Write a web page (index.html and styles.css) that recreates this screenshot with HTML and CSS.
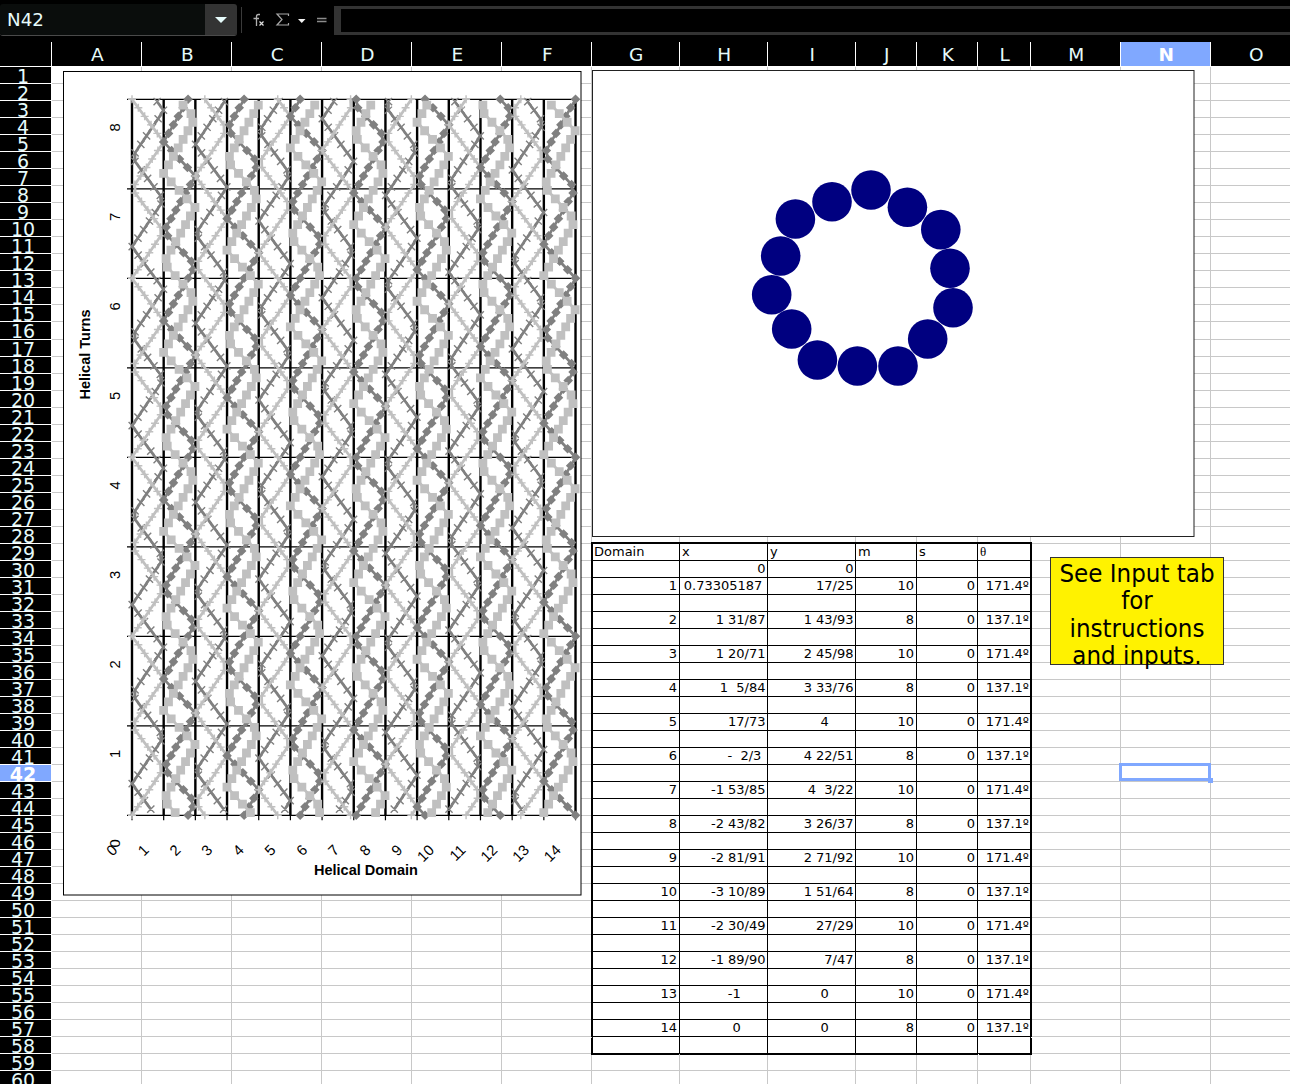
FILE: index.html
```html
<!DOCTYPE html>
<html lang="en">
<head>
<meta charset="utf-8">
<title>Helical domains</title>
<link rel="stylesheet" href="styles.css">
</head>
<body>
<div class="toolbar">
  <div class="namebox">
    <span class="namebox-text">N42</span>
    <span class="namebox-button"><svg width="14" height="8" viewBox="0 0 14 8"><path d="M1 1h12L7 7z" fill="#e6fbfb"/></svg></span>
  </div>
  <div class="formula-tools">
    <svg width="93" height="30" viewBox="240 5 93 30" fill="none">
      <path d="M241.500 7v26" stroke="#3a3a3a"/>
      <path d="M260 14.500h-1.500q-2 0-2 2V26M253.500 18.500h5.500" stroke="#b0b0b0" stroke-width="1.300"/>
      <path d="M259.500 21.500l4 4M263.500 21.500l-4 4" stroke="#e0e0e0" stroke-width="1.200"/>
      <path d="M288.500 16v-2h-11.500l5 5.500-5 5.500h11.500v-2" stroke="#a8a8a8" stroke-width="1.200"/>
      <path d="M298 19h7.500l-3.750 4z" fill="#f4f4f4"/>
      <path d="M317 18.500h9.500M317 21.500h9.500" stroke="#8c8c8c" stroke-width="1.300"/>
    </svg>
  </div>
  <div class="formula-input"></div>
</div>
<div class="columns" id="columns"></div>
<div class="body">
  <div class="row-heads" id="rowHeads"></div>
  <div class="cells" id="cells"></div>
  <svg class="chart helices" viewBox="63 71 519 825" width="519" height="825" id="helices"></svg>
  <svg class="chart ring" viewBox="592 70 603 467" width="603" height="467" id="ring"></svg>
  <div class="note"><div class="note-text">See Input tab<br>for<br>instructions<br>and inputs.</div></div>
  <div class="selection"><span class="handle"></span></div>
</div>
<script src="script.js"></script>
</body>
</html>
```
FILE: styles.css
```css
* { box-sizing: border-box; }

body {
  margin: 0;
  width: 1290px;
  height: 1084px;
  overflow: hidden;
  background: #fff;
  font-family: "DejaVu Sans", sans-serif;
  display: flex;
  flex-direction: column;
}

.toolbar {
  flex: none;
  height: 42px;
  background: #000;
  display: flex;
  padding-top: 4px;
}

.namebox {
  width: 237px;
  height: 32px;
  display: flex;
  border-bottom: 1px solid #4a4a4a;
  border-radius: 3px;
  overflow: hidden;
}

.namebox-text {
  flex: 1;
  padding-left: 7px;
  font-size: 18.300px;
  line-height: 31px;
  color: #e6fbfb;
  background: #0a0d0c;
}

.namebox-button {
  width: 32px;
  background: #333;
  display: flex;
  align-items: center;
  justify-content: center;
}

.formula-tools {
  width: 97px;
  padding: 1px 0 0 3px;
}

.formula-input {
  flex: 1;
  height: 29px;
  margin-top: 2px;
  border: solid #333;
  border-width: 3px 0 3px 7px;
}

.columns {
  flex: none;
  height: 25px;
  background: #000;
  display: flex;
  border-bottom: 1px solid #fff;
}

.column {
  flex: none;
  border-right: 1px solid #fff;
  color: #e6fbfb;
  font-size: 18.500px;
  line-height: 25px;
  text-align: center;
  padding-left: 1.500px;
}

.active {
  background: #80a8ff;
  color: #fff;
  font-weight: bold;
}

.body {
  position: relative;
  flex: none;
  width: 1290px;
  height: 1017px;
  overflow: hidden;
  display: flex;
}

.row-heads,
.cells {
  flex: none;
  display: grid;
  grid-template-rows: repeat(15, 17px) 18px;
  grid-auto-rows: 17px;
}

.row-heads { width: 51px; }

.row-head {
  background: #000;
  border-bottom: 1px solid #fff;
  color: #e6fbfb;
  font-size: 19px;
  line-height: 19px;
  text-align: center;
  padding-right: 5px;
}

.row-head.active { background: #80a8ff; color: #fff; }

.cells {
  isolation: isolate;
  margin-left: 1px;
  grid-template-columns: repeat(6, 90px) repeat(3, 88px) 61px 61px 53px repeat(3, 90px);
}

.cell {
  border-right: 1px solid #c8c8c8;
  border-bottom: 1px solid #c8c8c8;
  font-size: 13px;
  line-height: 16px;
  text-align: right;
  white-space: pre;
  padding: 0 2px;
}

.cell.data { border-color: #000; color: #000; z-index: 1; }
.cell.fraction { padding-right: 1.500px; }
.cell.decimal { padding-right: 0.500px; }
.cell.title { text-align: left; }
.cell.first { box-shadow: -1px 0 #000, inset 1px 0 #000; }
.cell.last { box-shadow: 1px 0 #000; padding-right: 1px; }
.cell.top { box-shadow: 0 -2px #000; }
.cell.top.first { box-shadow: -1px -2px #000, -1px 0 #000, 0 -2px #000, inset 1px 0 #000; }
.cell.top.last { box-shadow: 1px -2px #000, 1px 0 #000, 0 -2px #000; }
.cell.bottom { box-shadow: 0 1px #000; }
.cell.bottom.first { box-shadow: -1px 1px #000, inset 1px 0 #000; }
.cell.bottom.last { box-shadow: 1px 1px #000; }
.cell.theta { font-family: "Liberation Serif", serif; }

.chart { position: absolute; overflow: visible; }
.helices { left: 63px; top: 4px; }
.ring { left: 592px; top: 3px; }

.axis { font-family: "Liberation Sans", sans-serif; font-size: 14.800px; }
.axis-title { font-size: 14.500px; font-weight: bold; text-anchor: middle; }

.note {
  position: absolute;
  left: 1050px;
  top: 490px;
  width: 174px;
  height: 108px;
  border: 1px solid #333;
  background: #fff200;
}

.note-text {
  margin: 3px -10px 0;
  font-size: 24px;
  line-height: 27.300px;
  text-align: center;
  transform: scaleX(0.96);
}

.selection {
  position: absolute;
  left: 1119px;
  top: 696px;
  width: 92px;
  height: 18px;
  border: 3px solid #80a8ff;
}

.handle {
  position: absolute;
  right: -5px;
  bottom: -5px;
  width: 5px;
  height: 5px;
  background: #80a8ff;
}
```
FILE: script.js
```js
const widths = [90, 90, 90, 90, 90, 90, 88, 88, 88, 61, 61, 53, 90, 90, 90];
const names = 'ABCDEFGHIJKLMNO';
const rows = 60;

// x and y are kept with the padding of the fraction number format
const positions = [
  ['0.73305187 ', '17/25'], ['1 31/87', '1 43/93'], ['1 20/71', '2 45/98'],
  ['1  5/84', '3 33/76'], ['17/73', '4      '], ['-  2/3 ', '4 22/51'],
  ['-1 53/85', '4  3/22'], ['-2 43/82', '3 26/37'], ['-2 81/91', '2 71/92'],
  ['-3 10/89', '1 51/64'], ['-2 30/49', '27/29'], ['-1 89/90', '7/47'],
  ['-1      ', '0      '], ['0      ', '0      ']
];

const table = {
  29: ['Domain', 'x', 'y', 'm', 's', 'θ'],
  30: ['', '0', '0', '', '', '']
};
positions.forEach(([x, y], i) => {
  table[31 + 2 * i] = [String(i + 1), x, y, i % 2 ? '8' : '10', '0', i % 2 ? '137.1º' : '171.4º'];
});

function add(parent, cls, text) {
  const el = document.createElement('div');
  el.className = cls;
  el.textContent = text;
  parent.appendChild(el);
  return el;
}

const columns = document.getElementById('columns');
add(columns, 'column', '').style.width = '52px';
widths.forEach((w, i) => {
  add(columns, 'column' + (names[i] === 'N' ? ' active' : ''), names[i]).style.width = w + 'px';
});

const rowHeads = document.getElementById('rowHeads');
const cells = document.getElementById('cells');
for (let r = 1; r <= rows; r++) {
  add(rowHeads, 'row-head' + (r === 42 ? ' active' : ''), r);
  for (let c = 0; c < widths.length; c++) {
    let cls = 'cell';
    let text = '';
    if (r >= 29 && r <= 58 && c >= 6 && c <= 11) {
      cls += ' data';
      text = (table[r] || [])[c - 6] || '';
      if (c === 7 || c === 8) cls += text.includes('.') ? ' decimal' : ' fraction';
      if (r === 29) cls += ' title top';
      if (r === 58) cls += ' bottom';
      if (c === 6) cls += ' first';
      if (c === 11) cls += ' last';
      if (text === 'θ') cls += ' theta';
    }
    add(cells, cls, text);
  }
}

// Helix chart
const left = 132, top0 = 99.3, bottom = 815.3;
const dx = 31.68, turn = 89.5, step = turn / 10.5;
const dark = '#808080', light = '#c0c0c0';
let out = '<rect x="63.500" y="71.500" width="517.500" height="823.500" fill="#fff" stroke="#000"/>';

for (let i = 0; i <= 8; i++) {
  const y = top0 + i * turn;
  out += `<path d="M127 ${y}H576" stroke="#000" stroke-width="1.300"/>`;
}
for (let i = 0; i <= 14; i++) {
  const x = left + i * dx;
  out += `<path d="M${x} ${top0}V${bottom}" stroke="#000" stroke-width="2.400"/>`;
  out += `<path d="M${x} ${bottom}v5" stroke="#000" stroke-width="1.200"/>`;
}

const markers = {
  plus: (x, y) => `M${x - 4} ${y}h8M${x} ${y - 4}v8`,
  cross: (x, y) => `M${x - 3.6} ${y - 3.6}l7.200 7.200M${x - 3.6} ${y + 3.6}l7.200 -7.200`,
  diamond: (x, y) => `M${x} ${y - 4.8}l4.800 4.800l-4.800 4.800l-4.800 -4.800z`,
  square: (x, y) => `M${x - 4.6} ${y - 4.4}h8.800v8.800h-8.800z`
};

function strand(d, leftY, right, phase, shape, color) {
  let line = '', marks = '';
  for (let y = top0 + phase; y <= bottom + 0.5; y += step) {
    const t = (((y - leftY) % turn) + turn) % turn;
    const f = t < right ? t / right : (turn - t) / (turn - right);
    const x = left + (d + f) * dx;
    line += (line ? 'L' : 'M') + x.toFixed(2) + ' ' + y.toFixed(2);
    marks += markers[shape](+x.toFixed(2), +y.toFixed(2));
  }
  const solid = shape === 'diamond' || shape === 'square';
  out += `<path d="${line}" fill="none" stroke="${color}" stroke-width="2.700"/>`;
  out += `<path d="${marks}" fill="${solid ? color : 'none'}" stroke="${solid ? 'none' : color}" stroke-width="1.400"/>`;
}

let joint = top0;
for (let d = 0; d < 14; d++) {
  if (d % 2 === 0) {
    const right = turn * 10 / 21;
    strand(d, joint - 31.4, right, 2.4, 'cross', dark);
    strand(d, joint, right, 0, 'plus', light);
    joint += right;
  } else {
    const right = turn * 8 / 21;
    strand(d, joint, right, 0, 'diamond', dark);
    strand(d, joint + 31.7, right, 5.9, 'square', light);
    joint += right;
  }
}

for (let i = 0; i <= 8; i++) {
  out += `<text class="axis" text-anchor="middle" transform="translate(119.500 ${843.3 - i * turn}) rotate(-90)">${i}</text>`;
}
for (let i = 0; i <= 14; i++) {
  out += `<text class="axis" text-anchor="end" transform="translate(${(118.2 + i * dx).toFixed(2)} 851) rotate(-45)">${i}</text>`;
}
out += '<text class="axis axis-title" transform="translate(90 354.500) rotate(-90)">Helical Turns</text>';
out += '<text class="axis axis-title" x="366" y="875">Helical Domain</text>';
document.getElementById('helices').innerHTML = out;

// Cross-section chart
const centres = [
  [871, 190], [832, 201.8], [907.4, 207.3], [795.4, 219], [940.8, 229.6], [780.7, 256], [950, 268.3],
  [771.7, 294.7], [953, 307.8], [791.7, 329], [927.7, 339], [817.4, 360], [857.4, 366], [898, 366]
];
document.getElementById('ring').innerHTML =
  '<rect x="592.500" y="70.500" width="601.500" height="466" fill="#fff" stroke="#222"/>' +
  centres.map(([x, y]) => `<circle cx="${x}" cy="${y}" r="19.800" fill="#000080"/>`).join('');
```
